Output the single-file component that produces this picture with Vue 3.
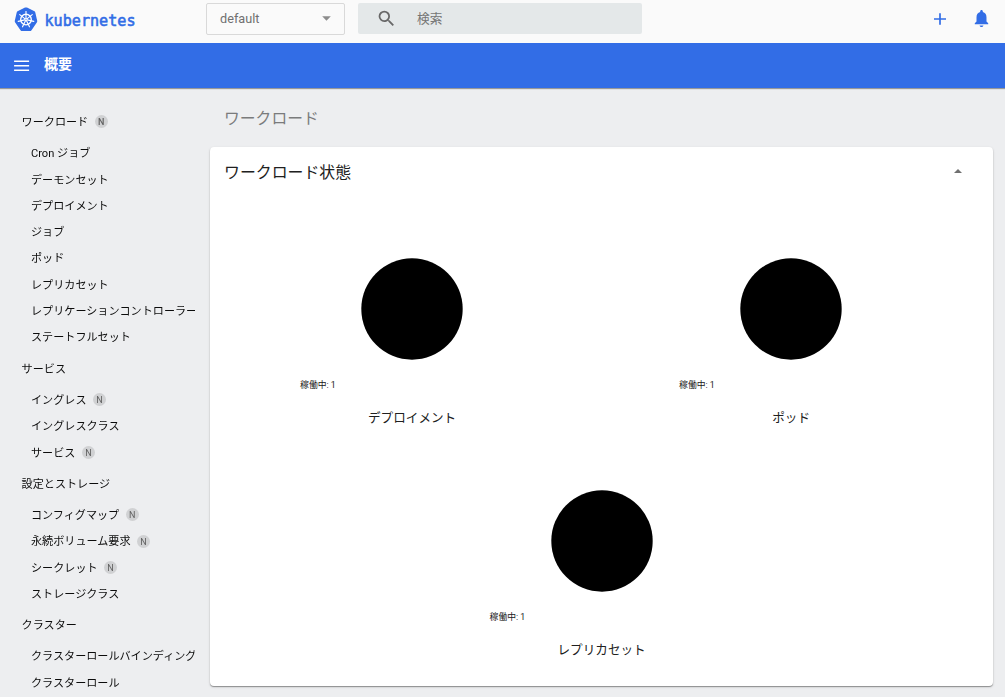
<script setup>
const groups = [
  {
    title: 'ワークロード',
    badge: true,
    items: [
      { label: 'Cron ジョブ' },
      { label: 'デーモンセット' },
      { label: 'デプロイメント' },
      { label: 'ジョブ' },
      { label: 'ポッド' },
      { label: 'レプリカセット' },
      { label: 'レプリケーションコントローラー' },
      { label: 'ステートフルセット' },
    ],
  },
  {
    title: 'サービス',
    items: [
      { label: 'イングレス', badge: true },
      { label: 'イングレスクラス' },
      { label: 'サービス', badge: true },
    ],
  },
  {
    title: '設定とストレージ',
    items: [
      { label: 'コンフィグマップ', badge: true },
      { label: '永続ボリューム要求', badge: true },
      { label: 'シークレット', badge: true },
      { label: 'ストレージクラス' },
    ],
  },
  {
    title: 'クラスター',
    items: [{ label: 'クラスターロールバインディング' }, { label: 'クラスターロール' }],
  },
]
const charts = ['デプロイメント', 'ポッド', 'レプリカセット']
const spokes = [0, 1, 2, 3, 4, 5, 6].map((i) => (i * 360) / 7)
</script>

<template>
  <div class="page">
    <header class="top">
      <svg class="logo" viewBox="0 0 24 25">
        <path d="M12 .4c.4 0 .7.1 1 .2l7 3.4c.7.3 1.100.8 1.300 1.500l1.900 8.200c.1.600 0 1.200-.4 1.700l-5.300 7.800c-.4.600-1 .9-1.700.9H8.200c-.7 0-1.300-.3-1.700-.9l-5.300-7.800c-.4-.5-.5-1.100-.4-1.700L2.700 5.500c.2-.7.6-1.200 1.300-1.500l7-3.400c.3-.1.600-.2 1-.2z" fill="#326de6" />
        <g fill="none" stroke="#fff">
          <circle cx="12" cy="12.600" r="5.300" stroke-width="1.400" />
          <path v-for="a in spokes" :key="a" d="M12 11.400V4.600" :transform="`rotate(${a} 12 12.6)`" stroke-width="1.150" stroke-linecap="round" />
        </g>
        <circle cx="12" cy="12.600" r="1.400" fill="#fff" />
        <circle cx="12" cy="12.600" r=".5" fill="#326de6" />
      </svg>
      <svg class="wordmark" viewBox="0 0 94 24">
        <text x="0.500" y="17.500" textLength="91" lengthAdjust="spacingAndGlyphs">kubernetes</text>
      </svg>
      <div class="select">
        <span>default</span>
        <svg width="9" height="5" viewBox="0 0 9 5"><path d="M.2.3h8.600L4.500 4.700z" fill="#8c8c8c" /></svg>
      </div>
      <div class="search">
        <svg width="21" height="21" viewBox="0 0 24 24"><path fill="#686868" d="M15.500 14h-.79l-.28-.27A6.471 6.471 0 0 0 16 9.500 6.500 6.500 0 1 0 9.500 16c1.610 0 3.090-.59 4.230-1.570l.27.28v.79l5 4.990L20.490 19l-4.990-5zm-6 0C7.010 14 5 11.990 5 9.500S7.010 5 9.500 5 14 7.010 14 9.500 11.990 14 9.500 14z" /></svg>
        <span>検索</span>
      </div>
      <div class="actions">
        <svg width="20" height="20" viewBox="0 0 20 20"><path stroke="#326de6" stroke-width="1.700" d="M4 10h12M10 4.200v11.600" /></svg>
        <svg width="19" height="19" viewBox="0 0 24 24"><path fill="#326de6" d="M9.600 20.800h4.800c0 1.100-1.100 2-2.400 2s-2.400-.9-2.400-2zM18.300 15.700V10.300c0-3.200-1.700-5.800-4.600-6.500v-.7c0-1-.8-1.800-1.700-1.800s-1.700.8-1.700 1.800v.7C7.400 4.500 5.700 7.100 5.700 10.300v5.400L3.500 18v1.300h17V18z" /></svg>
      </div>
    </header>

    <div class="bar">
      <svg width="16" height="12" viewBox="0 0 16 12"><path d="M.1 1.200h15M.1 5.700h15M.1 10.200h15" stroke="#fff" stroke-width="1.500" /></svg>
      <h1>概要</h1>
    </div>

    <div class="body">
      <nav>
        <section v-for="g in groups" :key="g.title">
          <div class="group">{{ g.title }}<i v-if="g.badge" class="badge">N</i></div>
          <div v-for="it in g.items" :key="it.label" class="item">
            {{ it.label }}<i v-if="it.badge" class="badge">N</i>
          </div>
        </section>
      </nav>
      <main>
        <h2>ワークロード</h2>
        <div class="card">
          <div class="card-head">
            <h3>ワークロード状態</h3>
            <svg width="8" height="4" viewBox="0 0 8 4"><path d="M0 4h8L4 0z" fill="#707070" /></svg>
          </div>
          <div class="charts">
            <figure v-for="c in charts" :key="c">
              <svg class="pie" viewBox="0 0 102 102"><circle cx="51" cy="51" r="50.700" /></svg>
              <div class="legend">稼働中: 1</div>
              <figcaption>{{ c }}</figcaption>
            </figure>
          </div>
        </div>
      </main>
    </div>
  </div>
</template>

<style>
body {
  overflow: hidden;
}
</style>

<style scoped>
* {
  box-sizing: border-box;
}
.page {
  width: 1005px;
  height: 697px;
  overflow: hidden;
  display: flex;
  flex-direction: column;
  background: #edeef0;
  font-family: Roboto, 'Noto Sans CJK JP', sans-serif;
  color: #202020;
}
h1, h2, h3, figure {
  margin: 0;
}
svg {
  display: block;
  flex: none;
}
.top {
  height: 43px;
  flex: none;
  display: flex;
  align-items: flex-start;
  background: #fafafa;
}
.logo {
  width: 24px;
  height: 25px;
  margin: 7px 0 0 14px;
}
.wordmark {
  width: 94px;
  height: 24px;
  margin: 8px 0 0 6px;
  overflow: visible;
}
.wordmark text {
  font-family: 'DejaVu Sans Mono', monospace;
  font-size: 16px;
  fill: #326de6;
  stroke: #326de6;
  stroke-width: 0.6px;
}
.select {
  width: 139px;
  height: 32px;
  margin: 3px 0 0 68px;
  padding: 0 13px 1px;
  border: 1px solid #d9d9d9;
  border-radius: 2px;
  display: flex;
  align-items: center;
  justify-content: space-between;
  font-size: 12.7px;
  color: #707070;
}
.search {
  width: 284px;
  height: 31px;
  margin: 3px 0 0 13px;
  padding-left: 18px;
  border-radius: 2px;
  background: #e4e8e9;
  display: flex;
  align-items: center;
  gap: 20px;
  font-size: 12.7px;
  color: #757575;
}
.search span {
  margin-top: -2px;
}
.actions {
  flex: 1;
  height: 37px;
  padding-right: 14px;
  display: flex;
  align-items: center;
  justify-content: flex-end;
  gap: 22px;
}
.bar {
  height: 45px;
  flex: none;
  display: flex;
  align-items: center;
  gap: 14px;
  padding-left: 14px;
  background: #326de6;
  color: #fff;
  position: relative;
  box-shadow: 0 1px 1px rgba(0, 0, 0, 0.36);
}
.bar h1 {
  font-size: 14px;
  line-height: 20px;
  font-weight: 700;
  margin-top: -4px;
}
.body {
  flex: 1;
  min-height: 0;
  display: flex;
}
nav {
  width: 195px;
  flex: none;
  overflow: hidden;
  padding-top: 14.9px;
  font-size: 11.1px;
  color: #0c0c0c;
  white-space: nowrap;
  will-change: transform;
}
.group,
.item {
  display: flex;
  align-items: center;
}
.group {
  height: 36.200px;
  padding-left: 21.600px;
}
.item {
  height: 26.320px;
  padding-left: 31px;
}
.badge {
  width: 13px;
  height: 13px;
  margin: 1.500px 0 0 6.500px;
  border-radius: 50%;
  background: #d0d1d3;
  color: #606060;
  font-size: 9px;
  line-height: 14px;
  font-style: normal;
  text-align: center;
}
.group .badge {
  font-weight: 500;
}
main {
  width: 783px;
  margin-left: 15px;
}
h2 {
  height: 59px;
  padding-left: 14px;
  line-height: 62px;
  font-size: 15.8px;
  font-weight: 400;
  color: #7a7b7c;
}
.card {
  height: 539px;
  border-radius: 4px;
  background: #fff;
  box-shadow: 0 1px 1px rgba(0, 0, 0, 0.35), 0 1px 3px rgba(0, 0, 0, 0.12);
}
.card-head {
  height: 49px;
  padding: 0 31px 1px 14px;
  display: flex;
  align-items: center;
  justify-content: space-between;
}
h3 {
  font-size: 15.900px;
  font-weight: 400;
}
.charts {
  padding: 62px 12px 0 12.200px;
  display: flex;
  flex-wrap: wrap;
  justify-content: center;
}
figure {
  width: 379px;
  height: 232px;
  display: flex;
  flex-direction: column;
  align-items: center;
}
.pie {
  width: 102px;
  height: 102px;
  flex: none;
}
.legend {
  width: 224px;
  margin-top: 17px;
  font-size: 8.800px;
  line-height: 16px;
}
figcaption {
  margin-top: 15px;
  font-size: 12.600px;
  line-height: 20px;
}
</style>
